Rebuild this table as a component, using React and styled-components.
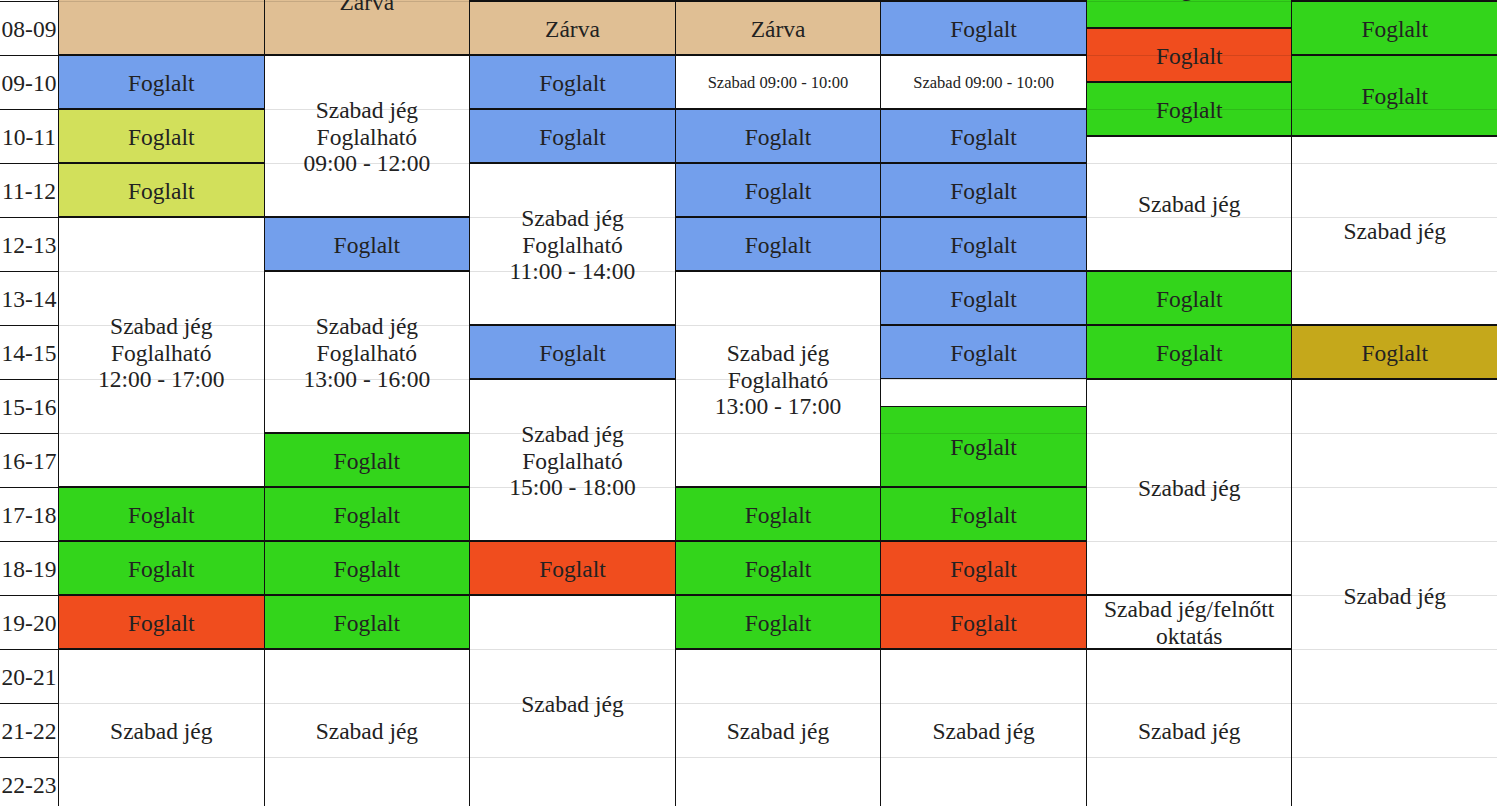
import React from "react";
import styled, { createGlobalStyle, css } from "styled-components";

const HOUR = 54;
const FIRST = 7;
const LAST = 23;

const GlobalStyle = createGlobalStyle`
  html, body { margin: 0; padding: 0; background: #fff; }
  body { font-family: "Liberation Serif", "Times New Roman", serif; color: #222; }
`;

const colors = {
  tan: "#e0bf94",
  blue: "#739fec",
  lime: "#d2e05b",
  green: "#33d51b",
  red: "#f04d1e",
  olive: "#c5a81b",
  free: "#ffffff",
  small: "#ffffff",
};

// [from, to, kind, text]
const days = [
  [
    [7, 9, "tan", ""],
    [9, 10, "blue", "Foglalt"],
    [10, 11, "lime", "Foglalt"],
    [11, 12, "lime", "Foglalt"],
    [12, 17, "free", "Szabad jég\nFoglalható\n12:00 - 17:00"],
    [17, 18, "green", "Foglalt"],
    [18, 19, "green", "Foglalt"],
    [19, 20, "red", "Foglalt"],
    [20, 23, "free", "Szabad jég"],
  ],
  [
    [7, 9, "tan", "Zárva"],
    [9, 12, "free", "Szabad jég\nFoglalható\n09:00 - 12:00"],
    [12, 13, "blue", "Foglalt"],
    [13, 16, "free", "Szabad jég\nFoglalható\n13:00 - 16:00"],
    [16, 17, "green", "Foglalt"],
    [17, 18, "green", "Foglalt"],
    [18, 19, "green", "Foglalt"],
    [19, 20, "green", "Foglalt"],
    [20, 23, "free", "Szabad jég"],
  ],
  [
    [7, 8, "tan", ""],
    [8, 9, "tan", "Zárva"],
    [9, 10, "blue", "Foglalt"],
    [10, 11, "blue", "Foglalt"],
    [11, 14, "free", "Szabad jég\nFoglalható\n11:00 - 14:00"],
    [14, 15, "blue", "Foglalt"],
    [15, 18, "free", "Szabad jég\nFoglalható\n15:00 - 18:00"],
    [18, 19, "red", "Foglalt"],
    [19, 23, "free", "Szabad jég"],
  ],
  [
    [7, 8, "tan", ""],
    [8, 9, "tan", "Zárva"],
    [9, 10, "small", "Szabad 09:00 - 10:00"],
    [10, 11, "blue", "Foglalt"],
    [11, 12, "blue", "Foglalt"],
    [12, 13, "blue", "Foglalt"],
    [13, 17, "free", "Szabad jég\nFoglalható\n13:00 - 17:00"],
    [17, 18, "green", "Foglalt"],
    [18, 19, "green", "Foglalt"],
    [19, 20, "green", "Foglalt"],
    [20, 23, "free", "Szabad jég"],
  ],
  [
    [7, 8, "tan", ""],
    [8, 9, "blue", "Foglalt"],
    [9, 10, "small", "Szabad 09:00 - 10:00"],
    [10, 11, "blue", "Foglalt"],
    [11, 12, "blue", "Foglalt"],
    [12, 13, "blue", "Foglalt"],
    [13, 14, "blue", "Foglalt"],
    [14, 15, "blue", "Foglalt"],
    [15.5, 17, "green", "Foglalt"],
    [17, 18, "green", "Foglalt"],
    [18, 19, "red", "Foglalt"],
    [19, 20, "red", "Foglalt"],
    [20, 23, "free", "Szabad jég"],
  ],
  [
    [7, 8.5, "green", "Foglalt"],
    [8.5, 9.5, "red", "Foglalt"],
    [9.5, 10.5, "green", "Foglalt"],
    [10.5, 13, "free", "Szabad jég"],
    [13, 14, "green", "Foglalt"],
    [14, 15, "green", "Foglalt"],
    [15, 19, "free", "Szabad jég"],
    [19, 20, "free", "Szabad jég/felnőtt\noktatás"],
    [20, 23, "free", "Szabad jég"],
  ],
  [
    [7, 8, "tan", ""],
    [8, 9, "green", "Foglalt"],
    [9, 10.5, "green", "Foglalt"],
    [10.5, 14, "free", "Szabad jég"],
    [14, 15, "olive", "Foglalt"],
    [15, 23, "free", "Szabad jég"],
  ],
];

const hours = [];
for (let h = FIRST; h < LAST; h++) hours.push(h);
const pad = (n) => String(n).padStart(2, "0");

export default function App() {
  return (
    <>
      <GlobalStyle />
      <Viewport>
        <Schedule>
          <TimeColumn>
            {hours.map((h) => (
              <TimeCell key={h}>
                {pad(h)}-{pad(h + 1)}
              </TimeCell>
            ))}
          </TimeColumn>
          {days.map((events, i) => (
            <DayColumn key={i}>
              {events.map(([from, to, kind, text]) => (
                <Slot
                  key={from}
                  $kind={kind}
                  style={{
                    gridRow: `${(from - FIRST) * 2 + 1} / span ${(to - from) * 2}`,
                  }}
                >
                  {text}
                </Slot>
              ))}
            </DayColumn>
          ))}
        </Schedule>
      </Viewport>
    </>
  );
}

const Viewport = styled.div`
  height: 100vh;
  overflow: hidden;
`;

const Schedule = styled.div`
  display: flex;
  margin-top: -${HOUR - 1}px;
`;

const TimeColumn = styled.div`
  flex: 0 0 58px;
  display: grid;
  grid-template-rows: repeat(${LAST - FIRST}, ${HOUR}px);
`;

const TimeCell = styled.div`
  box-sizing: border-box;
  border-top: 1px solid #111;
  padding-top: 2px;
  display: flex;
  align-items: center;
  justify-content: center;
  font-size: 23.5px;
  white-space: nowrap;
`;

const DayColumn = styled.div`
  flex: 1 1 0;
  min-width: 0;
  position: relative;
  border-left: 1px solid #111;
  display: grid;
  grid-template-rows: repeat(${(LAST - FIRST) * 2}, ${HOUR / 2}px);
  background: #fff;

  &::after {
    content: "";
    position: absolute;
    inset: 0;
    pointer-events: none;
    background: repeating-linear-gradient(
      to bottom,
      rgba(0, 0, 0, 0.12) 0 1px,
      transparent 1px ${HOUR}px
    );
  }
`;

const Slot = styled.div`
  box-sizing: border-box;
  border-top: 1px solid #111;
  border-bottom: 1px solid #111;
  padding-top: 2px;
  background: ${(p) => colors[p.$kind]};
  display: flex;
  align-items: center;
  justify-content: center;
  text-align: center;
  white-space: pre-line;
  font-size: 23.5px;
  line-height: 1.13;
  color: #222;
  ${(p) =>
    p.$kind === "small" &&
    css`
      font-size: 16.5px;
    `}
`;
